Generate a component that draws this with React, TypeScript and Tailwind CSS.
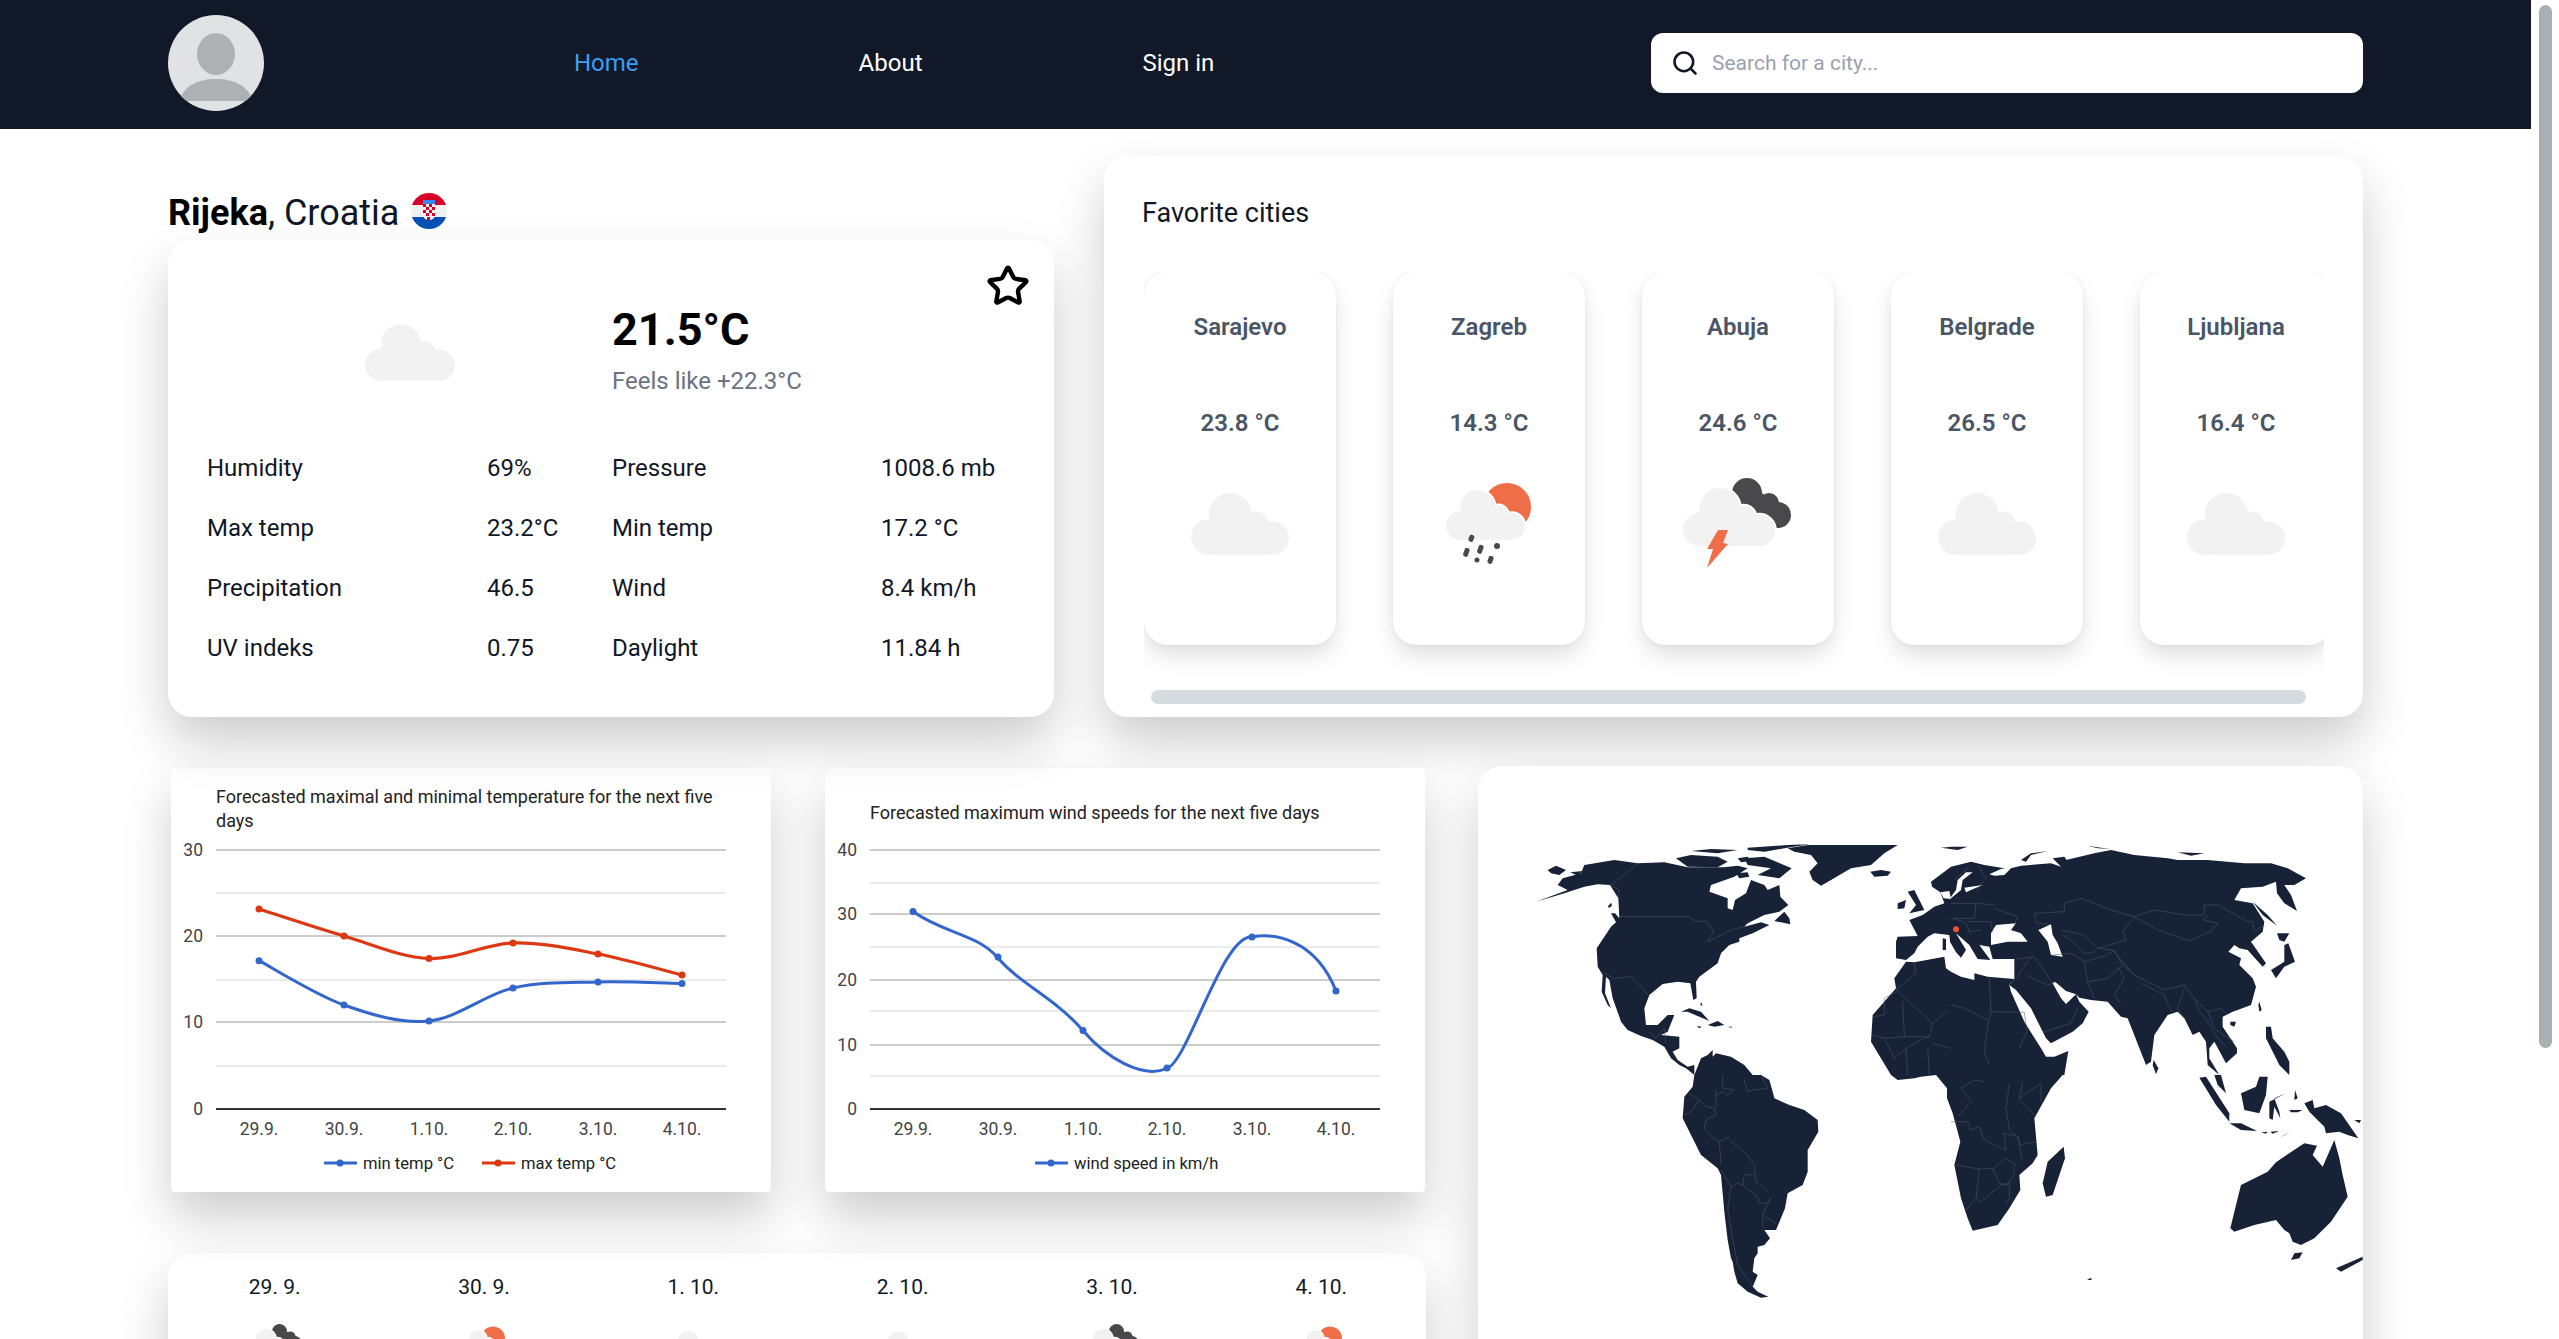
import React from "react";
import { Search, Star } from "lucide-react";

const stats = [
  ["Humidity", "69%", "Pressure", "1008.6 mb"],
  ["Max temp", "23.2°C", "Min temp", "17.2 °C"],
  ["Precipitation", "46.5", "Wind", "8.4 km/h"],
  ["UV indeks", "0.75", "Daylight", "11.84 h"],
];

const favorites = [
  { city: "Sarajevo", temp: "23.8 °C", icon: "cloud" },
  { city: "Zagreb", temp: "14.3 °C", icon: "rain" },
  { city: "Abuja", temp: "24.6 °C", icon: "storm" },
  { city: "Belgrade", temp: "26.5 °C", icon: "cloud" },
  { city: "Ljubljana", temp: "16.4 °C", icon: "cloud" },
];

const forecast = [
  { date: "29. 9.", icon: "storm" },
  { date: "30. 9.", icon: "rain" },
  { date: "1. 10.", icon: "cloud" },
  { date: "2. 10.", icon: "cloud" },
  { date: "3. 10.", icon: "storm" },
  { date: "4. 10.", icon: "rain" },
];

const CloudShape = ({ x, y, s, outline }: { x: number; y: number; s: number; outline?: boolean }) => (
  <g
    transform={`translate(${x} ${y}) scale(${s})`}
    fill={outline ? "#ffffff" : "#f1f2f1"}
    stroke={outline ? "#ffffff" : "none"}
    strokeWidth={outline ? 4 : 0}
  >
    <circle cx="18" cy="45" r="18" />
    <circle cx="40" cy="22" r="22" />
    <circle cx="66" cy="32" r="13" />
    <circle cx="83" cy="46" r="17" />
    <rect x="18" y="30" width="65" height="33" />
  </g>
);

const WeatherIcon = ({ type }: { type: string }) => {
  if (type === "rain") {
    return (
      <>
        <circle cx="98" cy="37" r="24" fill="#ef6e47" />
        <CloudShape x={37} y={20} s={0.79} outline />
        <CloudShape x={37} y={20} s={0.79} />
        <g fill="#49494b">
          <rect x="60" y="65" width="5" height="7" rx="2" transform="rotate(20 63 68)" />
          <rect x="55" y="78" width="5" height="9" rx="2" transform="rotate(20 58 82)" />
          <rect x="69" y="75" width="5" height="9" rx="2" transform="rotate(20 72 79)" />
          <circle cx="88" cy="76" r="3" />
          <circle cx="68" cy="90" r="2.5" />
          <rect x="79" y="86" width="5" height="8" rx="2" transform="rotate(20 82 90)" />
        </g>
      </>
    );
  }
  if (type === "storm") {
    return (
      <>
        <g fill="#49494b">
          <circle cx="89" cy="23" r="15" />
          <circle cx="111" cy="33" r="10" />
          <circle cx="120" cy="45" r="13" />
          <polygon points="76,16 100,20 132,45 120,58 100,50" />
        </g>
        <CloudShape x={25} y={18} s={0.92} outline />
        <CloudShape x={25} y={18} s={0.92} />
        <polygon points="60,60 70,60 65,73 70,74 49,98 55,79 49,79" fill="#ef6e47" />
      </>
    );
  }
  return <CloudShape x={31} y={23} s={0.98} />;
};

const CroatiaFlag = () => (
  <svg viewBox="0 0 36 36" className="w-9 h-9 -translate-y-[2px]">
    <defs>
      <clipPath id="flag-circle">
        <circle cx="18" cy="18" r="18" />
      </clipPath>
    </defs>
    <g clipPath="url(#flag-circle)">
      <rect width="36" height="12" fill="#d80027" />
      <rect y="12" width="36" height="12" fill="#f0f0f0" />
      <rect y="24" width="36" height="12" fill="#0052b4" />
      <path d="M12 7h12v4H12z" fill="#338af3" />
      <path d="M12 11h12v11c0 3-3 5-6 5s-6-2-6-5z" fill="#f0f0f0" />
      <g fill="#d80027">
        <rect x="12" y="11" width="3" height="3" />
        <rect x="18" y="11" width="3" height="3" />
        <rect x="15" y="14" width="3" height="3" />
        <rect x="21" y="14" width="3" height="3" />
        <rect x="12" y="17" width="3" height="3" />
        <rect x="18" y="17" width="3" height="3" />
        <rect x="15" y="20" width="3" height="3" />
        <rect x="21" y="20" width="3" height="3" />
        <rect x="16" y="24" width="3" height="3" />
      </g>
    </g>
  </svg>
);

const Avatar = () => (
  <svg viewBox="0 0 96 96" className="w-24 h-24 shrink-0">
    <defs>
      <clipPath id="avatar-circle">
        <circle cx="48" cy="48" r="48" />
      </clipPath>
    </defs>
    <g clipPath="url(#avatar-circle)">
      <rect width="96" height="96" fill="#e0e2e4" />
      <ellipse cx="48" cy="39" rx="19" ry="21" fill="#adb1b3" />
      <path d="M12 86c2-14 17-22 36-22s34 8 36 22z" fill="#adb1b3" />
    </g>
  </svg>
);

const smooth = (pts: number[][]) => {
  let d = `M${pts[0][0]} ${pts[0][1]}`;
  for (let i = 0; i < pts.length - 1; i++) {
    const p0 = pts[i - 1] || pts[i];
    const p1 = pts[i];
    const p2 = pts[i + 1];
    const p3 = pts[i + 2] || p2;
    const c1x = p1[0] + (p2[0] - p0[0]) / 6;
    const c1y = p1[1] + (p2[1] - p0[1]) / 6;
    const c2x = p2[0] - (p3[0] - p1[0]) / 6;
    const c2y = p2[1] - (p3[1] - p1[1]) / 6;
    d += ` C${c1x} ${c1y} ${c2x} ${c2y} ${p2[0]} ${p2[1]}`;
  }
  return d;
};

const chartX = [88, 173, 258, 342, 427, 511];
const chartDays = ["29.9.", "30.9.", "1.10.", "2.10.", "3.10.", "4.10."];
const maxTemp = [141, 168, 190.5, 175, 186, 207];
const minTemp = [192.7, 237, 253, 220, 214, 215.6];
const windSpeed = [143.5, 189, 262.6, 300, 169, 223];

const Axes = ({ major, minor, labels }: { major: number[]; minor: number[]; labels: string[] }) => (
  <>
    {minor.map((y) => (
      <line key={y} x1="45" x2="555" y1={y} y2={y} stroke="#ebebeb" strokeWidth="2" />
    ))}
    {major.map((y) => (
      <line key={y} x1="45" x2="555" y1={y} y2={y} stroke="#cccccc" strokeWidth="2" />
    ))}
    <line x1="45" x2="555" y1="341" y2="341" stroke="#333333" strokeWidth="2" />
    {labels.map((l, i) => (
      <text key={l} x="32" y={(i < major.length ? major[i] : 341) + 6} textAnchor="end" fontSize="17.5" fill="#444444">
        {l}
      </text>
    ))}
    {chartDays.map((d, i) => (
      <text key={d} x={chartX[i]} y="367" textAnchor="middle" fontSize="17.5" fill="#444444">
        {d}
      </text>
    ))}
  </>
);

const Dots = ({ ys, color }: { ys: number[]; color: string }) => (
  <>
    {ys.map((y, i) => (
      <circle key={i} cx={chartX[i]} cy={y} r="3.5" fill={color} />
    ))}
  </>
);

const LegendItem = ({ x, color, label }: { x: number; color: string; label: string }) => (
  <>
    <line x1={x} x2={x + 33} y1="395" y2="395" stroke={color} strokeWidth="3" />
    <circle cx={x + 16} cy="395" r="3.5" fill={color} />
    <text x={x + 39} y="401" fontSize="16.6" fill="#222222">
      {label}
    </text>
  </>
);

const TempChart = () => (
  <svg viewBox="0 0 600 424" className="w-[600px] h-[424px]">
    <text x="45" y="35" fontSize="18" fill="#222222">
      Forecasted maximal and minimal temperature for the next five
    </text>
    <text x="45" y="59" fontSize="18" fill="#222222">
      days
    </text>
    <Axes major={[82, 168, 254]} minor={[125, 212, 298]} labels={["30", "20", "10", "0"]} />
    <path
      d={smooth(chartX.map((x, i) => [x, minTemp[i]]))}
      fill="none"
      stroke="#3366cc"
      strokeWidth="3"
    />
    <path
      d={smooth(chartX.map((x, i) => [x, maxTemp[i]]))}
      fill="none"
      stroke="#dc3912"
      strokeWidth="3.2"
    />
    <Dots ys={minTemp} color="#3366cc" />
    <Dots ys={maxTemp} color="#dc3912" />
    <LegendItem x={153} color="#3366cc" label="min temp °C" />
    <LegendItem x={311} color="#dc3912" label="max temp °C" />
  </svg>
);

const WindChart = () => (
  <svg viewBox="0 0 600 424" className="w-[600px] h-[424px]">
    <text x="45" y="51" fontSize="18" fill="#222222">
      Forecasted maximum wind speeds for the next five days
    </text>
    <Axes
      major={[82, 146, 212, 277]}
      minor={[115, 179, 243, 308]}
      labels={["40", "30", "20", "10", "0"]}
    />
    <path
      d="M88 143.5 C118 165 152 166 172 189 C195 216 230 230 258 262.6 C280 289 318 312 342 300 C362 296 398 165 427 169 C448 165 490 170 511 223"
      fill="none"
      stroke="#3366cc"
      strokeWidth="3"
    />
    <Dots ys={windSpeed} color="#3366cc" />
    <LegendItem x={210} color="#3366cc" label="wind speed in km/h" />
  </svg>
);

// traced by hand, units are 1/3 of a screen pixel
const landGlobal = [
  // north america
  "15,200 110,165 80,150 95,130 150,115 160,90 250,75 320,85 400,82 470,97 580,97 620,92 650,100 610,125 540,150 535,170 590,190 590,220 605,225 612,195 645,175 660,135 700,150 710,165 745,150 748,185 772,210 745,230 700,240 650,265 640,275 690,262 715,270 665,295 625,310 625,320 595,330 570,355 560,385 505,425 495,440 497,490 487,495 478,445 440,440 395,447 355,480 340,520 345,570 380,570 410,540 430,540 410,590 390,600 445,605 445,640 425,650 440,675 470,695 490,690 490,720 465,700 445,690 420,670 400,635 365,615 330,603 290,585 270,560 265,545 245,490 235,435 225,425 222,475 240,520 230,510 212,470 215,420 200,395 197,340 210,320 240,275 255,262 240,235 252,235 265,250 262,190 237,150 200,148 160,155 100,175",
  "50,105 75,92 105,105 85,120 60,115",
  "118,112 155,108 140,122",
  "230,215 240,203 243,212 235,218",
  "640,70 700,65 782,100 745,130 680,120 720,100 650,90",
  "435,70 480,60 560,65 590,80 560,97 470,95",
  "480,48 540,42 620,45 560,55",
  "650,38 770,30 835,28 760,40 700,50 650,45",
  "620,70 650,65 660,78 630,82",
  "615,115 650,112 655,125 625,130",
  // greenland
  "770,40 830,30 1100,30 1060,55 1020,90 960,100 900,135 870,152 845,135 835,110 860,85 840,60 790,50",
  "1018,110 1050,105 1080,110 1070,122 1030,125",
  "730,258 760,230 775,250 778,268 750,262",
  "450,530 475,520 510,530 535,558 505,545 470,530",
  "530,570 560,558 580,570 550,575",
  "497,573 512,575 505,580",
  "590,575 605,575 600,578",
  "510,500 515,512 508,510",
  // south america
  "490,720 510,670 530,660 545,645 545,665 555,655 600,665 640,690 665,720 690,720 715,735 725,770 730,790 775,810 820,825 860,855 862,890 830,945 830,1010 815,1050 770,1075 762,1120 735,1185 700,1185 717,1210 700,1230 680,1235 680,1255 670,1270 665,1310 680,1320 665,1355 680,1370 712,1385 690,1388 650,1370 620,1345 610,1310 605,1280 600,1270 590,1215 580,1130 570,1020 560,1000 510,960 455,850 460,785 485,755",
  // africa
  "1125,380 1150,382 1240,365 1245,400 1260,410 1290,425 1330,435 1330,415 1370,425 1450,432 1435,450 1440,470 1480,560 1530,640 1545,665 1570,665 1612,648 1600,720 1595,720 1560,760 1510,850 1520,960 1505,985 1465,1020 1468,1065 1435,1120 1400,1170 1325,1187 1310,1150 1290,1090 1270,990 1288,920 1265,835 1248,790 1248,760 1215,720 1170,725 1150,730 1100,735 1080,720 1020,620 1025,540 1095,460 1090,430",
  // uk and ireland
  "1130,170 1150,165 1180,225 1135,235 1155,210",
  "1100,205 1125,195 1120,220 1100,222",
  "1235,310 1245,312 1245,345 1235,345",
  "1230,38 1260,35 1310,35 1280,45",
];

const landAsia = [
  "-160,305 -100,303 -125,255 -85,240 -50,215 -20,205 -32,172 -57,155 -60,140 0,95 60,80 100,90 160,100 135,115 160,120 180,100 210,92 300,85 330,95 305,70 340,65 365,100 355,107 345,75 430,55 480,45 550,60 650,70 680,75 770,75 880,85 960,85 1010,100 1065,130 1030,150 1000,150 1020,180 1038,228 1000,205 978,175 975,140 935,155 870,160 850,195 905,205 940,260 935,290 900,320 945,385 935,395 890,345 865,340 850,330 832,350 870,370 865,390 905,430 915,455 900,510 860,525 845,530 815,545 815,575 858,640 858,655 825,685 790,620 775,640 775,670 805,720 770,690 765,620 745,590 725,600 700,550 680,530 650,540 610,600 600,680 585,690 530,550 510,545 470,500 420,495 385,488 375,478 345,468 312,440 305,445 330,490 345,507 375,478 385,500 413,530 395,565 365,590 300,625 285,610 240,520 195,465 175,450 190,432 190,372 125,372 115,335 85,330 118,375 80,372 55,330 15,295 45,345 30,368 15,352 -3,320 -5,300 -50,295 -70,305 -100,335 -110,355 -135,375 -165,370 -165,320",
  "210,75 240,55 290,48 240,60 225,80",
  "410,32 450,38 480,42 440,40",
  "680,52 760,55 720,62",
  "905,200 950,240 978,272 935,240",
  "978,295 1015,295 1000,320 985,315",
  "960,405 1000,380 1000,330 1012,325 1032,380 1000,395 975,430",
  "925,500 932,525 925,530 922,510",
  "838,560 855,560 850,575 838,570",
  "608,675 622,700 615,718 605,690",
  "945,575 960,575 965,610 1000,650 1015,680 1015,720 985,690 960,640 945,610",
];

const seas = [
  "120,295 135,270 195,265 180,285 210,295 230,320 170,320 120,330",
  "262,285 300,268 305,300 320,325 335,365 300,360 290,320",
  "0,190 30,165 35,135 65,112 45,112 20,135 15,165 0,185",
  "40,158 95,150 60,165 45,172",
  "-32,172 -5,168 0,192 -22,190",
  "115,118 155,100 160,120 130,122",
];

const landSouth = [
  "745,8 765,5 835,115 835,140 795,90",
  "790,0 810,0 825,55 800,30",
  "835,145 870,145 918,168 870,165",
  "870,55 915,35 925,5 950,5 945,60 925,115 880,105",
  "955,80 1005,55 970,70 985,110 988,130 970,95 965,135 955,130",
  "1032,45 1040,70 1030,75",
  "1015,105 1055,105 1040,112 1020,112",
  "1060,85 1085,75 1090,100 1125,90 1170,115 1222,190 1190,180 1165,170 1125,175 1120,155 1075,110",
  "1210,135 1230,135 1225,145",
  "930,172 950,170 945,176",
  "958,170 985,168 965,176",
  "988,188 1020,170 1000,180",
  "838,460 860,370 870,330 950,290 975,262 1010,238 1060,205 1098,212 1085,240 1115,275 1150,195 1165,250 1175,300 1190,365 1140,440 1090,490 1050,510 1025,500 1015,475 1000,465 975,435 910,450 850,470",
  "1020,555 1030,535 1055,532 1045,550",
  "1155,580 1235,545 1235,555 1170,590",
  "338,215 342,250 305,360 285,365 275,325 290,260",
  "408,615 420,608 422,615",
];

const bordersGlobal = [
  "240,150 322,85",
  "237,150 265,165 262,190",
  "265,245 475,245 490,258 530,260 548,290 530,320 570,300 600,285 640,275",
  "220,415 250,430 300,425 320,445 335,460 355,485",
  "355,590 375,610 400,580 405,625",
  "1150,385 1155,415 1095,465 1205,565 1255,525",
  "1205,565 1195,605 1120,605 1115,497",
  "1095,470 1060,490 1060,540 1025,545",
  "1025,600 1060,610 1120,605",
  "1060,610 1090,670 1125,640 1170,615 1195,605",
  "1125,640 1130,720",
  "1190,640 1195,720",
  "1205,625 1260,640",
];

const bordersAsia = [
  "250,235 340,230 340,205 390,190 430,205 480,225 550,245 610,225 700,240 760,240 760,210 800,210 890,260 905,260 910,290 938,272",
  "250,235 258,265 295,268",
  "550,245 620,285 715,318 780,290 800,265 760,255 770,240",
  "550,245 515,290 525,315 440,340 485,345 550,420 640,465 700,450 730,490 770,530 810,520 830,540",
  "330,285 400,300 440,340",
  "335,300 360,315 400,355 435,350",
  "305,360 360,355 400,380 410,440 430,490",
  "400,380 470,360 490,345 515,390 470,430 410,440",
  "515,390 550,420",
  "500,395 520,430 490,480 510,505",
  "570,445 640,480 650,510 665,530",
  "700,460 680,520 700,550",
  "730,490 745,530 770,560 800,610 830,640",
  "770,530 790,580 850,620",
  "195,430 240,365",
  "195,372 250,365 305,445",
  "225,420 290,450 305,445",
  "280,590 360,565 380,520",
  "0,205 75,205 130,210",
  "75,205 70,250 0,250",
  "130,220 200,245 190,270",
  "50,260 120,260 125,290",
  "90,285 50,290",
  "10,250 45,265 60,300",
  "80,90 105,130 75,170",
  "60,90 10,135",
  "115,425 120,530 220,532",
  "120,530 112,560 100,650 115,690",
  "0,510 40,520 110,555",
  "220,532 228,590 205,640",
];

const bordersAfricaSouth = [
  "0,140 50,140 60,165 85,155 100,195 155,220 165,225 158,175 200,185 208,210 255,200",
  "10,270 85,282 130,280 160,250 190,265 190,295 170,330 145,325 125,280",
  "85,282 75,370 90,380 150,330 175,325 175,370 165,385",
  "75,370 45,405",
  "175,25 165,100 175,165 200,185",
  "205,75 250,120",
  "270,25 270,80",
  "270,25 205,70 215,20",
  "30,40 60,80 20,125",
  "100,20 70,15 30,40",
  "200,185 215,260",
];

const bordersSouthAmerica = [
  "475,55 505,75 525,95 550,100 555,120 525,135 520,160 545,190 565,200 595,185",
  "555,45 555,100",
  "565,200 570,270",
  "595,195 645,235 670,270 675,320 710,350",
  "570,285 600,335 620,325 635,330 680,365 685,385 705,385 720,370 695,415 695,460",
  "635,330 640,300 670,298",
  "600,335 590,400 605,490 620,570 670,640",
  "695,420 735,445",
  "505,75 480,110 460,120",
  "555,60 575,50 590,60 610,45 575,40 575,0",
  "640,15 650,50 665,45 710,40 690,0",
];

const Lines = ({ list }: { list: string[] }) => (
  <>
    {list.map((pts) => (
      <polyline key={pts} points={pts} fill="none" stroke="#4d5669" strokeWidth="1.6" />
    ))}
  </>
);

const WorldMap = () => (
  <svg viewBox="0 0 2520 1440" className="w-[840px] h-[480px] shrink-0">
    <g fill="#182237">
      {landGlobal.map((pts) => (
        <polygon key={pts} points={pts} />
      ))}
      <g transform="translate(1260 0)">
        {landAsia.map((pts) => (
          <polygon key={pts} points={pts} />
        ))}
      </g>
      <g transform="translate(1260 720)">
        {landSouth.map((pts) => (
          <polygon key={pts} points={pts} />
        ))}
      </g>
    </g>
    <g transform="translate(1260 0)" fill="#ffffff">
      {seas.map((pts) => (
        <polygon key={pts} points={pts} />
      ))}
    </g>
    <Lines list={bordersGlobal} />
    <g transform="translate(1260 0)">
      <Lines list={bordersAsia} />
      <circle cx="15" cy="283" r="9" fill="#f0512f" />
    </g>
    <g transform="translate(1260 720)">
      <Lines list={bordersAfricaSouth} />
    </g>
    <g transform="translate(0 720)">
      <Lines list={bordersSouthAmerica} />
    </g>
  </svg>
);

const App = () => {
  return (
    <div className="flex h-[1339px] w-full overflow-hidden bg-white font-['Roboto',sans-serif]">
      <div className="w-[2531px] shrink-0">
        {/* Navbar */}
        <nav className="h-[129px] bg-[#111827] flex items-center px-[168px] pb-[3px]">
          <Avatar />
          <div className="ml-[310px] flex items-center gap-[220px] text-2xl text-white">
            <span className="text-[#3b9ff6]">Home</span>
            <span>About</span>
            <span>Sign in</span>
          </div>
          <div className="ml-auto w-[712px] h-[60px] bg-white rounded-xl flex items-center pl-5 gap-[13px]">
            <Search size={28} strokeWidth={2.2} className="text-gray-900" />
            <input
              placeholder="Search for a city..."
              className="flex-1 text-[21px] pt-[2px] outline-none placeholder:text-gray-400"
            />
          </div>
        </nav>

        <main className="px-[168px] pt-[27px] flex flex-col gap-[49px]">
          {/* Current weather and favorites */}
          <div className="grid grid-cols-[886px_1259px] gap-[50px] items-end">
            <div>
              <div className="flex items-center gap-3 mb-[7px]">
                <h1 className="text-4xl text-gray-900">
                  <span className="font-bold text-black">Rijeka</span>, Croatia
                </h1>
                <CroatiaFlag />
              </div>
              <div className="relative h-[477px] rounded-3xl bg-white shadow-[0_25px_50px_0_rgba(0,0,0,0.2)] pl-[39px] pt-[66px]">
                <Star size={44} strokeWidth={2.4} className="absolute top-[24px] right-[24px] text-black" />
                <div className="grid grid-cols-[280px_125px_269px_1fr]">
                  <div className="col-span-2 flex justify-center pt-[18px]">
                    <svg viewBox="0 0 100 63" className="w-[90px] h-[57px]">
                      <CloudShape x={0} y={0} s={1} />
                    </svg>
                  </div>
                  <div className="col-span-2">
                    <p className="text-[45px] leading-[48px] font-bold text-black">21.5°C</p>
                    <p className="mt-[11px] text-2xl text-gray-500">Feels like +22.3°C</p>
                  </div>
                </div>
                <div className="mt-[41px] grid grid-cols-[280px_125px_269px_1fr] auto-rows-[60px] items-center text-2xl text-gray-900">
                  {stats.map((row) =>
                    row.map((cell) => <span key={cell}>{cell}</span>)
                  )}
                </div>
              </div>
            </div>

            <div className="h-[561px] rounded-3xl bg-white shadow-[0_25px_50px_0_rgba(0,0,0,0.2)] pt-[41px]">
              <h2 className="pl-[38px] text-[27px] leading-8 text-gray-900">Favorite cities</h2>
              <div className="ml-[40px] w-[1180px] mt-[43px] pb-[45px] flex gap-[57px] overflow-hidden">
                {favorites.map((f) => (
                  <div
                    key={f.city}
                    className="w-[192px] h-[373px] shrink-0 rounded-3xl bg-white shadow-[0_12px_25px_-3px_rgba(0,0,0,0.14),0_0_6px_rgba(0,0,0,0.05)] flex flex-col items-center pt-[39px] text-2xl font-semibold text-gray-600"
                  >
                    <p>{f.city}</p>
                    <p className="mt-[64px]">{f.temp}</p>
                    <svg viewBox="0 0 160 110" className="mt-[31px] w-[160px] h-[110px]">
                      <WeatherIcon type={f.icon} />
                    </svg>
                  </div>
                ))}
              </div>
              <div className="ml-[47px] w-[1155px] h-[14px] rounded-full bg-[#d5dce0]" />
            </div>
          </div>

          {/* Charts, forecast and map */}
          <div className="grid grid-cols-[1258px_885px] gap-[52px]">
            <div className="pt-[2px]">
              <div className="grid grid-cols-[600px_600px] gap-[54px] pl-[3px]">
                <div className="rounded-sm bg-white shadow-[0_25px_50px_0_rgba(0,0,0,0.2)]">
                  <TempChart />
                </div>
                <div className="rounded-sm bg-white shadow-[0_25px_50px_0_rgba(0,0,0,0.2)]">
                  <WindChart />
                </div>
              </div>
              <div className="mt-[61px] rounded-3xl bg-white shadow-[0_25px_50px_0_rgba(0,0,0,0.2)] h-[300px] pt-[18px] grid grid-cols-6 justify-items-center pl-[2px]">
                {forecast.map((d) => (
                  <div key={d.date} className="flex flex-col items-center">
                    <p className="text-[21px] leading-8 text-gray-900">{d.date}</p>
                    <svg viewBox="0 0 160 110" className="mt-[17px] w-[80px] h-[55px]">
                      <WeatherIcon type={d.icon} />
                    </svg>
                  </div>
                ))}
              </div>
            </div>
            <div className="h-[700px] rounded-3xl bg-white shadow-[0_25px_50px_0_rgba(0,0,0,0.2)] overflow-hidden pl-[53px] pt-[69px] flex">
              <WorldMap />
            </div>
          </div>
        </main>
      </div>
      {/* Page scrollbar */}
      <div className="flex-1 pl-[8px] pt-[5px]">
        <div className="w-[13px] h-[1043px] rounded-full bg-[#a9b0b3]" />
      </div>
    </div>
  );
};

export default App;
